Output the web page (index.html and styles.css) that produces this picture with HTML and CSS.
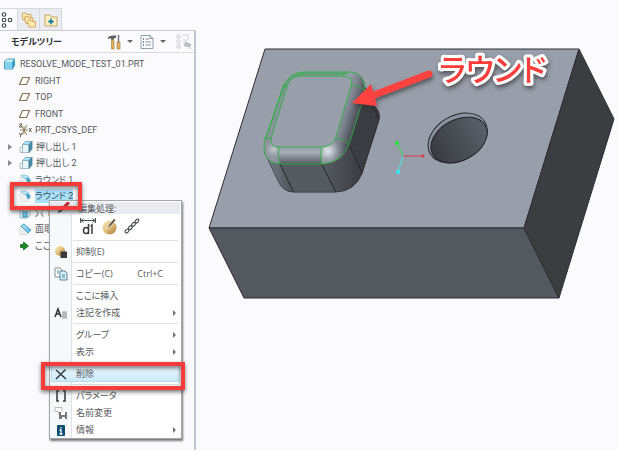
FILE: index.html
```html
<!DOCTYPE html>
<html lang="ja">
<head>
<meta charset="utf-8">
<title>モデルツリー</title>
<link rel="stylesheet" href="styles.css">
</head>
<body>
<svg class="defs" aria-hidden="true">
  <defs>
    <linearGradient id="gold" x1="0" y1="0" x2="1" y2="1"><stop offset="0" stop-color="#fff3cf"/><stop offset=".5" stop-color="#e0bd77"/><stop offset="1" stop-color="#a67934"/></linearGradient>
    <linearGradient id="blue" x1="0" y1="0" x2="1" y2="1"><stop offset="0" stop-color="#b5ecfb"/><stop offset="1" stop-color="#4fb4dc"/></linearGradient>
    <symbol id="plane" viewBox="0 0 14 14"><path d="M4.500 3.500H11.500L8.500 10.500H1.500Z" fill="#fffdf7" stroke="#8a7657" stroke-width="1.200"/></symbol>
    <symbol id="extrude" viewBox="0 0 14 14"><path d="M1 7H4V12.500H1Z" fill="#f2f3f5" stroke="#a9afb5" stroke-width=".7"/><path d="M3.500 4.500 6.500 1.500H13L10 4.500Z" fill="#a9e2f5" stroke="#5b93ad" stroke-width=".7"/><path d="M3.500 4.500H10V12.500H3.500Z" fill="#e9f6fb" stroke="#7fa5b6" stroke-width=".7"/><path d="M10 4.500 13 1.500V9L10 12.500Z" fill="#4b91b2" stroke="#396d85" stroke-width=".7"/></symbol>
    <symbol id="round" viewBox="0 0 14 14"><path d="M2 4V12.500H10V9Q9 5 5 4Z" fill="#f0f1f3" stroke="#d5d8db" stroke-width=".6"/><path d="M3 2H7Q12 3 12.500 8L10 10Q9 5 4 4Z" fill="#b9e8f7" stroke="#7fbdd4" stroke-width=".7"/><path d="M9 4Q12 6 12.500 8L10 10.500Q9.500 7 8 6Z" fill="#459ec2"/></symbol>
    <symbol id="hole" viewBox="0 0 14 14"><path d="M2 4 5 2H12V10L9 12H2Z" fill="#ddeff5" stroke="#79a6b8" stroke-width=".8"/><path d="M5 5V11H9V5" fill="#6ac2e2" stroke="#4094b3"/></symbol>
    <symbol id="chamfer" viewBox="0 0 14 14"><path d="M2 4V12.500H10V9Z" fill="#eceef1" stroke="#ccd0d4" stroke-width=".7"/><path d="M3 4 6 2 13 8 10 11Z" fill="url(#blue)" stroke="#4a9bb9" stroke-width=".9"/></symbol>
    <symbol id="csys" viewBox="0 0 14 14"><path d="M3 2 9 12M9 2 4 12M6 3V11M2 7H10" fill="none" stroke="#8e7650" stroke-width=".9"/><path d="M1 1H4L1 4H4M1 10 2.500 12 4 10M2.500 12V14M11 5 13.500 9M13.500 5 11 9" fill="none" stroke="#493f32" stroke-width=".8"/></symbol>
    <symbol id="insert" viewBox="0 0 14 14"><path d="M2.500 5.500H5.500V3L10.500 7 5.500 11V8.500H2.500Z" fill="#178a21" stroke="#075d10" stroke-width=".7"/></symbol>
    <symbol id="part" viewBox="0 0 14 14"><path d="M1.500 4.500 4.500 2H12L10 4.500V12H1.500Z" fill="#c5f0fb" stroke="#3987a6" stroke-width=".8"/><path d="M2 5H9V12H2Z" fill="#7fd3ef"/><path d="M9 5 12 2V9L9 12Z" fill="#3fa1c7"/></symbol>
  </defs>
</svg>

<div class="app">
  <aside class="sidebar">
    <nav class="tabs">
      <button class="tab tab-active" aria-label="モデルツリー">
        <svg class="icon-tab" viewBox="0 0 16 16"><g fill="none" stroke="#3c4043" stroke-width="1.100"><circle cx="6" cy="2.500" r="1.800"/><circle cx="6" cy="8" r="1.800"/><circle cx="6" cy="13.500" r="1.800"/><circle cx="12" cy="8" r="1.800"/></g></svg>
      </button>
      <button class="tab" aria-label="フォルダブラウザ">
        <svg class="icon-tab" viewBox="0 0 16 16"><g fill="#ffe9af" stroke="#c59b4c" stroke-width=".8"><path d="M1 3Q1 1 2.500 1H5L6 2.500H10V8H2Z"/><path d="M3.500 6Q3.500 4.500 5 4.500H7L8 6H12V11.500H5Z"/><path d="M6.500 9.500Q6.500 8 8 8H10L11 9.500H14.500V15H8Z"/></g></svg>
      </button>
      <button class="tab" aria-label="お気に入り">
        <svg class="icon-tab" viewBox="0 0 16 16"><path d="M2 14V3H7L8.500 5H14V14Z" fill="#fff0c4" stroke="#c6a561"/><path d="M8 6.500 9 8.500 11 9.500 9 10.500 8 12.500 7 10.500 5 9.500 7 8.500Z" fill="#1d80a3" stroke="#1d80a3" stroke-width=".6"/></svg>
      </button>
    </nav>
    <section class="panel">
      <header class="panel-head">
        <h1 class="panel-title">モデルツリー</h1>
        <div class="tools">
          <button class="tool" aria-label="設定">
            <svg class="icon-tool" viewBox="0 0 16 16"><path d="M2 3Q4 1 10 1.500V4H8V6H5V4L2 5Z" fill="#5c6063"/><path d="M5.500 5.500H8V15H5.500Z" fill="#e2ad58" stroke="#a97a32" stroke-width=".6"/><path d="M12.500 1V8" stroke="#6f777d" stroke-width="1.500"/><path d="M11 8H14V15H11Z" fill="#e5b765" stroke="#9b6d29" stroke-width=".6"/></svg>
            <span class="caret"></span>
          </button>
          <button class="tool" aria-label="表示">
            <svg class="icon-tool" viewBox="0 0 16 16"><path d="M2 1.500H11L14 4.500V14.500H2Z" fill="#fafcfe" stroke="#95a1ad"/><path d="M11 1.500V4.500H14M6.500 5H10M6.500 8H12M6.500 11H12" fill="none" stroke="#8393a2"/><path d="M4 5H5M4 8H5M4 11H5" stroke="#456682" stroke-width="1.500"/></svg>
            <span class="caret"></span>
          </button>
          <button class="tool tool-muted" aria-label="ツリーフィルタ">
            <svg class="icon-tool" viewBox="0 0 16 16"><g fill="none" stroke="#c6c8cb" stroke-width=".8"><path d="M1 1H4V4H1ZM1 6H4V9H1ZM1 11H4V14H1ZM7 6H10V9H7M7 1H13M12 2V6"/></g><path d="M8 11Q11.500 7 15 11 11.500 14 8 11M9 8 15 15" fill="#d4d5d8" stroke="#999ca0" stroke-width=".8"/></svg>
          </button>
        </div>
      </header>
      <ul class="tree">
        <li class="node node-root"><svg class="icon"><use href="#part"/></svg><span class="name">RESOLVE_MODE_TEST_01.PRT</span></li>
        <li class="node"><svg class="icon"><use href="#plane"/></svg><span class="name">RIGHT</span></li>
        <li class="node"><svg class="icon"><use href="#plane"/></svg><span class="name">TOP</span></li>
        <li class="node"><svg class="icon"><use href="#plane"/></svg><span class="name">FRONT</span></li>
        <li class="node"><svg class="icon"><use href="#csys"/></svg><span class="name">PRT_CSYS_DEF</span></li>
        <li class="node node-parent"><svg class="icon"><use href="#extrude"/></svg><span class="name">押し出し 1</span></li>
        <li class="node node-parent"><svg class="icon"><use href="#extrude"/></svg><span class="name">押し出し 2</span></li>
        <li class="node"><svg class="icon"><use href="#round"/></svg><span class="name">ラウンド 1</span></li>
        <li class="node"><svg class="icon"><use href="#round"/></svg><span class="name name-selected">ラウンド 2</span></li>
        <li class="node"><svg class="icon"><use href="#hole"/></svg><span class="name">穴 1</span></li>
        <li class="node"><svg class="icon"><use href="#chamfer"/></svg><span class="name">面取</span></li>
        <li class="node"><svg class="icon"><use href="#insert"/></svg><span class="name">ここに</span></li>
      </ul>
    </section>
  </aside>

  <main class="viewport">
    <svg class="scene" viewBox="197 0 422 450" preserveAspectRatio="xMinYMin meet" role="img" aria-label="3Dモデル">
      <defs>
        <linearGradient id="frontRound" x1="0" y1="351" x2="0" y2="402" gradientUnits="userSpaceOnUse"><stop offset="0" stop-color="#969daa"/><stop offset=".3" stop-color="#a9afba"/><stop offset="1" stop-color="#555a62"/></linearGradient>
        <linearGradient id="sideRound" x1="342" y1="240" x2="405" y2="260" gradientUnits="userSpaceOnUse"><stop offset="0" stop-color="#969daa"/><stop offset=".4" stop-color="#7c828e"/><stop offset="1" stop-color="#3e4148"/></linearGradient>
        <linearGradient id="cornerFace" x1="300" y1="0" x2="410" y2="0" gradientUnits="userSpaceOnUse"><stop offset="0" stop-color="#555960"/><stop offset="1" stop-color="#3a3c41"/></linearGradient>
        <linearGradient id="leftFace" x1="120" y1="0" x2="190" y2="0" gradientUnits="userSpaceOnUse"><stop offset="0" stop-color="#777e88"/><stop offset="1" stop-color="#555960"/></linearGradient>
        <radialGradient id="shine" cx="308" cy="363" r="56" gradientUnits="userSpaceOnUse"><stop offset="0" stop-color="#e3e6eb"/><stop offset=".3" stop-color="#b5bac4"/><stop offset="1" stop-color="#686d77" stop-opacity="0"/></radialGradient>
        <radialGradient id="shineLeft" cx="146" cy="358" r="45" gradientUnits="userSpaceOnUse"><stop offset="0" stop-color="#c5c9d1"/><stop offset="1" stop-color="#737a85" stop-opacity="0"/></radialGradient>
        <linearGradient id="bore" x1="0" y1="0" x2="1" y2="0"><stop offset="0" stop-color="#393c41"/><stop offset="1" stop-color="#5a6069"/></linearGradient>
        <filter id="drop" x="-20%" y="-30%" width="140%" height="170%"><feDropShadow dx="1" dy="3" stdDeviation="2" flood-color="#333" flood-opacity=".65"/></filter>
      </defs>
      <g stroke="#2b2e33" stroke-linejoin="round">
        <path d="M265 49H579L524 228H209Z" fill="#989faa"/>
        <path d="M209 228H524L559 298H244Z" fill="#54585f"/>
        <path d="M579 49 614 119 559 298 524 228Z" fill="#3b3d41"/>
      </g>
      <!-- rounded boss -->
      <g transform="translate(225 30) scale(.33333)">
        <path d="M118 365 158 450Q173 486 205 486H332Q390 484 411 430L462 270Q467 245 448 229L414 160 373 340 290 402H165Z" fill="#3b3d42" stroke="#25272b" stroke-width="3"/>
        <path d="M118 365 158 450Q172 485 205 485L165 402Q125 400 118 365Z" fill="url(#leftFace)"/>
        <path d="M165 402H290L332 485H205Z" fill="#555960"/>
        <path d="M290 402Q355 398 373 345L411 430Q390 483 332 485Z" fill="url(#cornerFace)"/>
        <path d="M165 402 205 485M290 402 332 485M373 345 411 430M440 222 462 268" fill="none" stroke="#25272b" stroke-width="3"/>
        <path d="M117 340Q112 400 165 402H290Q352 398 373 340L420 190Q423 126 375 126H235Q190 128 172 175Z" fill="#8b929e"/>
        <path d="M379 165Q388 142 352 138L375 126Q423 128 420 182L373 345Q355 400 290 402L288 351Q320 350 332 325Z" fill="url(#sideRound)"/>
        <path d="M162 351H288V402H162Z" fill="url(#frontRound)"/>
        <path d="M288 351Q320 350 332 325L371 344Q353 400 288 402Z" fill="url(#shine)"/>
        <path d="M138 325Q135 350 162 351V402Q112 398 117 330Z" fill="url(#shineLeft)"/>
        <path d="M138 325Q133 351 162 351H290Q320 350 332 325L379 165Q388 138 350 138H225Q195 142 186 170Z" fill="#989faa"/>
        <g fill="none" stroke="#23b83a" stroke-width="2.500">
          <path d="M117 340Q112 400 165 402H290Q352 398 373 340L420 190Q423 126 375 126H235Q190 128 172 175Z"/>
          <path d="M138 325Q133 351 162 351H290Q320 350 332 325L379 165Q388 138 350 138H225Q195 142 186 170Z"/>
          <path d="M117 325H138M162 351Q156 375 165 402M290 351Q284 375 291 402M332 325Q357 326 373 345M379 165Q402 165 420 182M172 168 186 170M225 138 235 126M350 138 362 126"/>
          <path d="M121 328 178 168Q195 132 235 131H370"/>
        </g>
      </g>
      <!-- drilled hole -->
      <g transform="translate(380 30) scale(.33333)" stroke="#24272c" stroke-width="3">
        <ellipse cx="233" cy="324" rx="95" ry="67" transform="rotate(-30 233 324)" fill="#8b929e"/>
        <ellipse cx="237" cy="330" rx="90" ry="61" transform="rotate(-28 237 330)" fill="url(#bore)"/>
      </g>
      <!-- coordinate triad -->
      <path d="M403 156H423" stroke="#d83d4c"/><path d="M403 156 397 143" stroke="#32dc43"/><path d="M403 156 398 172" stroke="#41e7ef"/>
      <circle cx="423" cy="156" r="1.500" fill="#e43545"/><circle cx="397" cy="143" r="2" fill="#1be931"/><circle cx="398" cy="172" r="2" fill="#28eef6"/>
      <g filter="url(#drop)">
        <path d="M374 95 429 74" stroke="#fd4340" stroke-width="7" stroke-linecap="round"/>
        <path d="M352 103 371 84 377 106Z" fill="#fd4340"/>
      </g>
      <text class="callout" x="439" y="81" filter="url(#drop)">ラウンド</text>
    </svg>
  </main>

  <div class="menu" role="menu">
    <div class="menu-head"><svg class="icon-menu" viewBox="0 0 14 14"><path d="M1.500 12 3 9 7 5 9 7 5 11Z" fill="#4b5054"/><path d="M7 5 11 1H13.500V3L9 7Z" fill="#bf2a2e"/></svg><span>編集処理:</span></div>
    <div class="menu-tools">
      <button class="edit-tool" aria-label="寸法編集"><svg class="icon-edit" viewBox="0 0 18 18"><path d="M1.500 1V6M16.500 1V6M2 3.500H16M4.500 1.500 2 3.500 4.500 5.500M13.500 1.500 16 3.500 13.500 5.500" fill="none" stroke="#4e5154"/><path d="M9.500 7V17M9.500 12Q8.500 10.500 7 10.500 4.500 10.500 4.500 13.500T7 16.500Q8.500 16.500 9.500 15M13 17V8L11.500 9" fill="none" stroke="#393b3d" stroke-width="1.500"/></svg></button>
      <button class="edit-tool" aria-label="定義を編集"><svg class="icon-edit" viewBox="0 0 18 18"><circle cx="8.500" cy="10.500" r="7" fill="url(#gold)"/><path d="M5.500 12 8 7.500 13 1.500 15 3 10 9Z" fill="#56534d" stroke="#fff2d2" stroke-width=".8"/></svg></button>
      <button class="edit-tool" aria-label="参照を編集"><svg class="icon-edit" viewBox="0 0 18 18"><g fill="none" stroke="#484b4e" stroke-width="1.100"><ellipse cx="4" cy="14" rx="2.300" ry="1.500" transform="rotate(-45 4 14)"/><ellipse cx="7.300" cy="10.700" rx="2.300" ry="1.500" transform="rotate(-45 7.300 10.700)"/><ellipse cx="10.600" cy="7.400" rx="2.300" ry="1.500" transform="rotate(-45 10.600 7.400)"/><ellipse cx="13.900" cy="4.100" rx="2.300" ry="1.500" transform="rotate(-45 13.900 4.100)"/></g></svg></button>
    </div>
    <hr class="rule">
    <button class="item" role="menuitem"><svg class="icon-menu" viewBox="0 0 14 14"><circle cx="6" cy="6" r="5" fill="url(#gold)"/><path d="M6.500 6.500H13V13H6.500Z" fill="#3a3a3b"/></svg><span>抑制(E)</span></button>
    <hr class="rule">
    <button class="item" role="menuitem"><svg class="icon-menu" viewBox="0 0 14 14"><path d="M1 1H6L8 3V10H1Z" fill="#fff" stroke="#80909a"/><path d="M6 4H11L13 6V13H6Z" fill="#d5effa" stroke="#5b8499"/><path d="M3 4H5M3 6H5M8 8H11M8 10H11" stroke="#438aa9"/></svg><span>コピー(C)</span><kbd class="keys">Ctrl+C</kbd></button>
    <hr class="rule">
    <button class="item" role="menuitem"><span class="icon-menu"></span><span>ここに挿入</span></button>
    <button class="item item-sub" role="menuitem"><svg class="icon-menu" viewBox="0 0 14 14"><path d="M1 11 4 3 7 11M2 8H6" fill="none" stroke="#303337" stroke-width="1.500"/><path d="M8 5H13V13H8Z" fill="#c9cccf"/><path d="M8 7H13M8 9H13M8 11H13" stroke="#909498" stroke-width=".7"/></svg><span>注記を作成</span></button>
    <hr class="rule">
    <button class="item item-sub" role="menuitem"><span class="icon-menu"></span><span>グループ</span></button>
    <button class="item item-sub" role="menuitem"><span class="icon-menu"></span><span>表示</span></button>
    <hr class="rule">
    <button class="item item-hot" role="menuitem"><svg class="icon-menu" viewBox="0 0 14 14"><path d="M2 3 12 12M11.500 2.500 2 12" fill="none" stroke="#303a40" stroke-width="1.500"/></svg><span>削除</span></button>
    <hr class="rule">
    <button class="item" role="menuitem"><svg class="icon-menu" viewBox="0 0 14 14"><path d="M5 2H3V12H5M9 2H11V12H9" fill="none" stroke="#333639" stroke-width="1.500"/></svg><span>パラメータ</span></button>
    <button class="item" role="menuitem"><svg class="icon-menu" viewBox="0 0 14 14"><path d="M1 1.500H8V5L5 8 4 5.500H1Z" fill="#fff" stroke="#a4a9ad" stroke-width=".8"/><path d="M5 6H13V13H5Z" fill="#737a80"/><path d="M7 6H11V9H7M8 11H11V13H8Z" fill="#fff"/></svg><span>名前変更</span></button>
    <button class="item item-sub" role="menuitem"><svg class="icon-menu" viewBox="0 0 14 14"><rect x="3" y="2" width="8" height="11" rx="1" fill="#0c4f70"/><path d="M7 4V5.500M5.500 7H7V11M5.500 11H8.500" fill="none" stroke="#fff" stroke-width="1.300"/></svg><span>情報</span></button>
  </div>
  <div class="marker marker-feature"></div>
  <div class="marker marker-delete"></div>
</div>
</body>
</html>
```
FILE: styles.css
```css
* { box-sizing: border-box; }

body {
  margin: 0;
  background: #fbfbfe;
  color: #55585b;
  font-family: "Open Sans", "Noto Sans CJK JP", sans-serif;
  font-size: 9px;
  font-feature-settings: "palt";
}

button {
  padding: 0;
  border: 0;
  background: none;
  color: inherit;
  font: inherit;
}

svg { display: block; }
.defs { position: absolute; width: 0; height: 0; }

.app {
  position: relative;
  display: flex;
  min-height: 100vh;
  overflow: hidden;
}

.sidebar {
  display: flex;
  flex: 0 0 196px;
  flex-direction: column;
  padding-top: 8px;
}

.tabs { display: flex; height: 22px; }
.tab {
  display: grid;
  place-items: center;
  width: 22px;
  border: 1px solid #d6d8df;
  border-bottom: 0;
  border-left: 0;
  background: #ebecf1;
}
.tab-active { width: 18px; background: #fbfbfe; }
.icon-tab { width: 16px; height: 16px; }
.tab-active .icon-tab { margin-left: -5px; }

.panel {
  flex: 1;
  border-top: 1px solid #c9ccd2;
  border-right: 2px solid #c2c5cb;
}
.panel-head {
  display: flex;
  align-items: center;
  justify-content: space-between;
  height: 22px;
  padding: 0 2px 0 11px;
  border-bottom: 1px solid #d9dbe0;
}
.panel-title {
  margin: 0;
  color: #303336;
  font-size: 9px;
  font-weight: 600;
}
.tools { display: flex; gap: 6px; }
.tool { display: flex; align-items: center; gap: 5px; }
.tool-muted { margin-left: 4px; }
.icon-tool { width: 16px; height: 16px; }
.caret {
  border: 3px solid transparent;
  border-top-color: #62666b;
  border-bottom: 0;
}

.tree {
  display: grid;
  grid-auto-rows: 1fr;
  height: 198px;
  margin: 3px 0 0;
  padding: 0;
  list-style: none;
  font-family: Roboto, "Noto Sans CJK JP", sans-serif;
}
.node {
  display: flex;
  align-items: center;
  gap: 3px;
  padding-left: 18px;
  line-height: 14px;
  white-space: nowrap;
}
.node-root { padding-left: 3px; }
.node-parent { padding-left: 8px; }
.node-parent::before {
  width: 4px;
  border: 3px solid transparent;
  border-right: 0;
  border-left: 4px solid #85888c;
  content: "";
}
.icon { flex: none; width: 14px; height: 14px; }
.name-selected { background: #a9e0fa; color: #344e5c; }

.viewport { flex: 1; min-width: 0; padding-left: 1px; }
.scene { width: 100%; }
.callout {
  fill: #f83c3b;
  stroke: #fff;
  stroke-width: 6px;
  stroke-linejoin: round;
  paint-order: stroke;
  font-size: 31px;
  font-weight: 500;
}

.menu {
  position: absolute;
  top: 200px;
  left: 49px;
  width: 133px;
  padding: 1px 1px 0;
  border: 1px solid #a2a5a9;
  background: linear-gradient(90deg, #f7f8fa 21px, #dfe1e4 21px, #dfe1e4 22px, #fff 22px);
  box-shadow: 1px 2px 2px #777;
}
.menu-head {
  display: flex;
  align-items: center;
  gap: 8px;
  height: 12px;
  padding-left: 5px;
  background: #e9ebf0;
}
.menu-tools {
  display: flex;
  gap: 4px;
  height: 24px;
  align-items: center;
  padding-left: 28px;
}
.icon-edit { width: 18px; height: 18px; }
.icon-menu { flex: none; width: 14px; height: 14px; }
.rule {
  height: 5px;
  margin: 0 2px 0 22px;
  border: solid transparent;
  border-width: 2px 0;
  background: #dfe1e4 content-box;
}
.item {
  display: flex;
  align-items: center;
  gap: 8px;
  width: 100%;
  height: 17px;
  padding: 0 4px 0 3px;
  line-height: 17px;
  white-space: nowrap;
}
.keys { margin: 0 13px 0 auto; font: inherit; }
.item-sub::after {
  margin-left: auto;
  border: 3px solid transparent;
  border-right: 0;
  border-left: 3px solid #6f7275;
  content: "";
}
.item-hot { background: linear-gradient(#eef8fd, #cbeafa); box-shadow: inset 0 0 0 1px #b5dcef; }

.marker {
  position: absolute;
  border: 4px solid #f63b3b;
  box-shadow: 0 2px 4px #333a, inset 0 2px 4px #333a;
}
.marker-feature { top: 182px; left: 10px; width: 72px; height: 28px; }
.marker-delete { top: 362px; left: 41px; width: 144px; height: 28px; }
```
